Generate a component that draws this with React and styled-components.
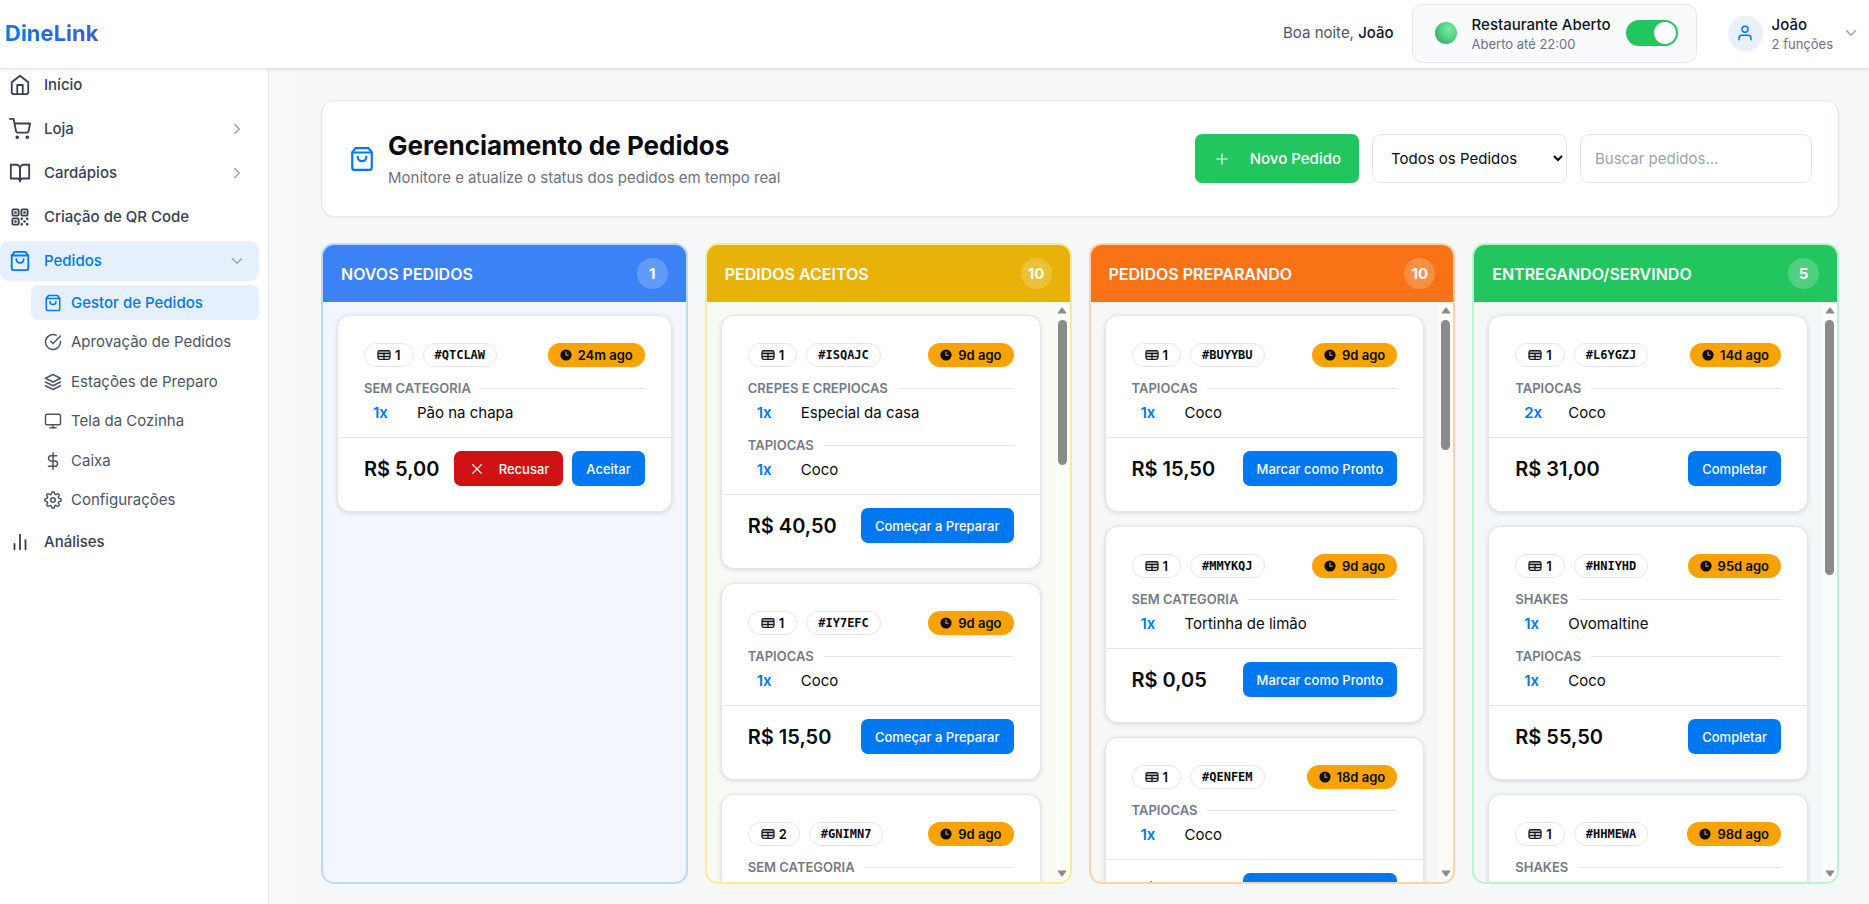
import React from "react";
import styled, { createGlobalStyle } from "styled-components";
import {
  FiBarChart2, FiBookOpen, FiCheckCircle, FiChevronDown, FiChevronRight, FiDollarSign, FiHome,
  FiLayers, FiMonitor, FiPlus, FiSettings, FiShoppingBag, FiShoppingCart, FiUser, FiX,
} from "react-icons/fi";
import { HiOutlineQrCode } from "react-icons/hi2";

const blue = "#0078f0";
const line = "#e3e6ea";

const GlobalStyle = createGlobalStyle`
  *, *::before, *::after { box-sizing: border-box; }
  body {
    margin: 0;
    font-family: Inter, "Liberation Sans", sans-serif;
    font-size: 15px;
    line-height: 20px;
    color: #080a12;
    background: #f6f8fa;
  }
  button, input, select { font: inherit; color: inherit; }
  h1, h2, p { margin: 0; }
  svg { flex: none; display: block; }
`;

const Page = styled.div`
  display: flex;
  flex-direction: column;
  height: 100vh;
  overflow: hidden;
`;

/* Top bar */
const TopBar = styled.header`
  position: relative;
  z-index: 2;
  flex: none;
  display: flex;
  align-items: center;
  height: 69px;
  padding: 0 9px 2px 5px;
  background: #fff;
  border-bottom: 1px solid #e5e9ec;
  box-shadow: 0 1px 3px rgba(15, 23, 42, 0.1);
`;

const Logo = styled.a`
  margin-right: auto;
  font-size: 22px;
  line-height: 28px;
  font-weight: 700;
  text-decoration: none;
  color: transparent;
  background: linear-gradient(90deg, #0b78e6, #3a5fd9);
  background-clip: text;
`;

const Greeting = styled.p`
  color: #4b5563;
  strong { font-weight: 500; color: #0f1420; }
`;

const StatusBox = styled.div`
  display: flex;
  align-items: center;
  height: 59px;
  margin: 0 31px 0 18px;
  padding: 0 18px 0 22px;
  gap: 15px;
  border: 1px solid ${line};
  border-radius: 11px;
  background: #f9fafc;
`;

const Orb = styled.span`
  width: 22px;
  height: 22px;
  border-radius: 50%;
  background: radial-gradient(circle at 65% 35%, #74ee9c 0%, #55cf85 45%, #2f9160 100%);
`;

const TwoLines = styled.div`
  display: flex;
  flex-direction: column;
  text-align: left;
  strong { font-weight: 500; line-height: 21px; color: #0f1420; }
  span { font-size: 13px; line-height: 18px; color: #6b7280; }
`;

const Toggle = styled.input`
  appearance: none;
  display: flex;
  justify-content: flex-end;
  width: 52px;
  height: 26px;
  margin: 0;
  padding: 2px;
  border-radius: 13px;
  background: #22c55e;
  &::before {
    content: "";
    width: 22px;
    height: 22px;
    border-radius: 50%;
    background: #fff;
  }
`;

const UserMenu = styled.button`
  display: flex;
  align-items: center;
  gap: 9px;
  padding: 0;
  border: 0;
  background: none;
  > svg { color: #9ca3af; }
`;

const Avatar = styled.span`
  display: grid;
  place-items: center;
  width: 35px;
  height: 35px;
  border-radius: 50%;
  color: ${blue};
  background: #e7f0fc;
`;

/* Sidebar */
const Body = styled.div`
  display: flex;
  flex: 1;
  min-height: 0;
`;

const Sidebar = styled.nav`
  flex: none;
  display: flex;
  flex-direction: column;
  gap: 4px;
  width: 269px;
  margin-top: -4px;
  padding-right: 9px;
  background: #fff;
  border-right: 1px solid ${line};
`;

const NavLink = styled.a`
  display: flex;
  align-items: center;
  gap: 13px;
  height: 40px;
  padding: 0 13px 0 9px;
  border-radius: 9px;
  font-weight: 500;
  text-decoration: none;
  color: ${(p) => (p.$active ? blue : "#374151")};
  background: ${(p) => (p.$active ? "#e5f0fc" : "none")};
  span { flex: 1; }
  span + svg { color: #9ca3af; }
`;

const SubNav = styled.div`
  display: grid;
  align-content: space-between;
  height: 233px;
  padding-left: 31px;
`;

const SubLink = styled.a`
  display: flex;
  align-items: center;
  gap: 9px;
  height: 35px;
  padding: 0 13px;
  border-radius: 7px;
  text-decoration: none;
  font-weight: ${(p) => (p.$active ? 500 : 400)};
  color: ${(p) => (p.$active ? blue : "#4b5563")};
  background: ${(p) => (p.$active ? "#e5f0fc" : "none")};
`;

/* Main area */
const Main = styled.main`
  flex: 1;
  min-width: 0;
  display: flex;
  flex-direction: column;
  gap: 26px;
  padding: 31px 30px 20px 52px;
  background: linear-gradient(90deg, #f9fafb 27px, #f5f7f9 27px);
`;

const PageHeader = styled.section`
  flex: none;
  display: flex;
  align-items: center;
  gap: 13px;
  height: 117px;
  padding: 0 26px 0 27px;
  border: 1px solid ${line};
  border-radius: 13px;
  background: #fff;
  box-shadow: 0 1px 2px rgba(15, 23, 42, 0.06);
  > svg { color: ${blue}; }
`;

const Heading = styled.div`
  margin-right: auto;
  h1 { font-size: 26px; line-height: 36px; font-weight: 700; }
  p { line-height: 24px; margin-top: 2px; color: #6b7280; }
`;

const NewOrder = styled.button`
  display: flex;
  align-items: center;
  gap: 19px;
  height: 49px;
  padding: 0 18px;
  border: 0;
  border-radius: 7px;
  font-weight: 500;
  color: #fff;
  background: #22c55e;
`;

const Filter = styled.select`
  width: 195px;
  height: 49px;
  padding: 0 0 0 14px;
  border: 1px solid ${line};
  border-radius: 9px;
  background: #fff;
`;

const Search = styled.input`
  width: 232px;
  height: 49px;
  padding: 0 14px;
  border: 1px solid ${line};
  border-radius: 9px;
  background: #fff;
  &::placeholder { color: #9ca3af; opacity: 1; }
`;

/* Board */
const Board = styled.div`
  flex: 1;
  min-height: 0;
  display: grid;
  grid-template-columns: repeat(4, minmax(0, 1fr));
  grid-template-rows: minmax(0, 1fr);
  gap: 17px;
`;

const Column = styled.section`
  display: flex;
  flex-direction: column;
  min-height: 0;
  overflow: hidden;
  border: 2px solid ${(p) => p.$tone.border};
  border-radius: 13px;
  background: ${(p) => p.$tone.body};
`;

const ColumnHead = styled.header`
  flex: none;
  display: flex;
  align-items: center;
  justify-content: space-between;
  height: 57px;
  padding: 0 18px;
  color: #fff;
  background: ${(p) => p.$tone.head};
  h2 { font-size: 16px; line-height: 22px; font-weight: 600; }
`;

const Count = styled.span`
  display: grid;
  place-items: center;
  width: 31px;
  height: 31px;
  border-radius: 50%;
  font-weight: 700;
  background: rgba(255, 255, 255, 0.2);
`;

const ColumnBody = styled.div`
  flex: 1;
  display: flex;
  min-height: 0;
`;

const Cards = styled.div`
  flex: 1;
  min-width: 0;
  display: flex;
  flex-direction: column;
  gap: 14px;
  padding: 13px 14px;
  overflow-y: auto;
  scrollbar-width: none;
`;

const ScrollTrack = styled.div`
  flex: none;
  display: flex;
  flex-direction: column;
  align-items: center;
  gap: 6px;
  width: 15px;
  padding: 5px 0;
  background: rgba(255, 255, 255, 0.6);
  color: #8b8b8b;
  svg:last-child { margin-top: auto; }
`;

const Thumb = styled.div`
  width: 9px;
  height: ${(p) => p.$size};
  border-radius: 5px;
  background: #8b8b8b;
`;

const Card = styled.article`
  flex: none;
  border: 1px solid ${line};
  border-radius: 13px;
  background: #fff;
  box-shadow: 0 1px 4px rgba(15, 23, 42, 0.14);
`;

const CardTop = styled.div`
  display: grid;
  gap: 12px;
  padding: 27px 26px 13px;
`;

const Tags = styled.div`
  display: flex;
  gap: 9px;
`;

const Pill = styled.span`
  display: flex;
  align-items: center;
  gap: 4px;
  height: 24px;
  padding: 0 12px;
  border: 1px solid ${line};
  border-radius: 12px;
  font-size: 13px;
  line-height: 18px;
  font-weight: 600;
`;

const CodePill = styled(Pill)`
  padding: 0 11px;
  font-family: "DejaVu Sans Mono", monospace;
  font-size: 12px;
  font-weight: 700;
`;

const AgePill = styled(Pill)`
  gap: 6px;
  margin-left: auto;
  border: 0;
  background: #faa200;
`;

const Category = styled.div`
  display: grid;
  gap: 4px;
`;

const CategoryName = styled.div`
  display: flex;
  align-items: center;
  gap: 10px;
  font-size: 13px;
  line-height: 18px;
  font-weight: 600;
  color: #747b86;
  &::after { content: ""; flex: 1; height: 1px; background: ${line}; }
`;

const Item = styled.div`
  display: grid;
  grid-template-columns: 44px 1fr;
  padding-left: 9px;
  line-height: 23px;
  b { font-weight: 600; color: ${blue}; }
`;

const CardFoot = styled.footer`
  display: flex;
  align-items: center;
  gap: 9px;
  padding: 13px 26px 25px;
  border-top: 1px solid ${line};
`;

const Price = styled.strong`
  margin-right: auto;
  font-size: 20px;
  line-height: 28px;
  font-weight: 600;
`;

const Action = styled.button`
  display: flex;
  align-items: center;
  gap: 13px;
  height: 35px;
  padding: 0 14px;
  border: 0;
  border-radius: 7px;
  font-size: 13px;
  font-weight: 500;
  white-space: nowrap;
  color: #fff;
  background: ${(p) => (p.$danger ? "#d01214" : blue)};
`;

const TableIcon = () => (
  <svg width="14" height="14" viewBox="0 0 14 14" fill="none" stroke="#15181f" strokeWidth="1.3">
    <rect x="1" y="3" width="12" height="3" fill="#9a9da3" stroke="none" />
    <rect x="1" y="2.6" width="12" height="8.8" rx="1.8" />
    <path d="M1 5.7h12M1 8.5h12M7 5.7v5.7" />
  </svg>
);

const ClockIcon = () => (
  <svg width="12" height="12" viewBox="0 0 12 12">
    <circle cx="6" cy="6" r="5.6" fill="#0b0c10" />
    <path d="M6 2.6V6.3h2.7" fill="none" stroke="#faa200" strokeWidth="1.1" />
  </svg>
);

const Arrow = ({ down }) => (
  <svg width="10" height="7" viewBox="0 0 10 7" fill="currentColor" stroke="currentColor" strokeLinejoin="round">
    <path d={down ? "M1 1h8L5 6.3z" : "M5 .7 9 6H1z"} />
  </svg>
);

const QrIcon = ({ size }) => <HiOutlineQrCode size={size} strokeWidth={2} />;

const nav = [
  { label: "Início", icon: FiHome },
  { label: "Loja", icon: FiShoppingCart, more: true },
  { label: "Cardápios", icon: FiBookOpen, more: true },
  { label: "Criação de QR Code", icon: QrIcon },
];

const subNav = [
  { label: "Gestor de Pedidos", icon: FiShoppingBag, active: true },
  { label: "Aprovação de Pedidos", icon: FiCheckCircle },
  { label: "Estações de Preparo", icon: FiLayers },
  { label: "Tela da Cozinha", icon: FiMonitor },
  { label: "Caixa", icon: FiDollarSign },
  { label: "Configurações", icon: FiSettings },
];

const order = (table, code, age, price, ...groups) => ({ table, code, age, price, groups });

const columns = [
  {
    title: "NOVOS PEDIDOS",
    count: 1,
    tone: { head: "#3b82f6", border: "#bcdaf8", body: "#f3f6fc" },
    orders: [order(1, "#QTCLAW", "24m ago", "R$ 5,00", ["SEM CATEGORIA", "1x", "Pão na chapa"])],
  },
  {
    title: "PEDIDOS ACEITOS",
    count: 10,
    action: "Começar a Preparar",
    thumb: "145px",
    tone: { head: "#e8b208", border: "#fbec94", body: "#f9f9f6" },
    orders: [
      order(1, "#ISQAJC", "9d ago", "R$ 40,50", ["CREPES E CREPIOCAS", "1x", "Especial da casa"], ["TAPIOCAS", "1x", "Coco"]),
      order(1, "#IY7EFC", "9d ago", "R$ 15,50", ["TAPIOCAS", "1x", "Coco"]),
      order(2, "#GNIMN7", "9d ago", "R$ 15,50", ["SEM CATEGORIA", "1x", "Coco"]),
    ],
  },
  {
    title: "PEDIDOS PREPARANDO",
    count: 10,
    action: "Marcar como Pronto",
    thumb: "130px",
    tone: { head: "#f97316", border: "#fcd3a8", body: "#f9f7f5" },
    orders: [
      order(1, "#BUYYBU", "9d ago", "R$ 15,50", ["TAPIOCAS", "1x", "Coco"]),
      order(1, "#MMYKQJ", "9d ago", "R$ 0,05", ["SEM CATEGORIA", "1x", "Tortinha de limão"]),
      order(1, "#QENFEM", "18d ago", "R$ 15,50", ["TAPIOCAS", "1x", "Coco"]),
    ],
  },
  {
    title: "ENTREGANDO/SERVINDO",
    count: 5,
    action: "Completar",
    thumb: "255px",
    tone: { head: "#22c55e", border: "#bbf3d0", body: "#f4f7f8" },
    orders: [
      order(1, "#L6YGZJ", "14d ago", "R$ 31,00", ["TAPIOCAS", "2x", "Coco"]),
      order(1, "#HNIYHD", "95d ago", "R$ 55,50", ["SHAKES", "1x", "Ovomaltine"], ["TAPIOCAS", "1x", "Coco"]),
      order(1, "#HHMEWA", "98d ago", "R$ 15,50", ["SHAKES", "1x", "Ovomaltine"]),
    ],
  },
];

function OrderCard({ data, action }) {
  return (
    <Card>
      <CardTop>
        <Tags>
          <Pill><TableIcon />{data.table}</Pill>
          <CodePill>{data.code}</CodePill>
          <AgePill><ClockIcon />{data.age}</AgePill>
        </Tags>
        {data.groups.map(([name, qty, item]) => (
          <Category key={name}>
            <CategoryName>{name}</CategoryName>
            <Item><b>{qty}</b><span>{item}</span></Item>
          </Category>
        ))}
      </CardTop>
      <CardFoot>
        <Price>{data.price}</Price>
        {action ? (
          <Action>{action}</Action>
        ) : (
          <>
            <Action $danger><FiX size={18} strokeWidth={1.5} />Recusar</Action>
            <Action>Aceitar</Action>
          </>
        )}
      </CardFoot>
    </Card>
  );
}

export default function App() {
  return (
    <Page>
      <GlobalStyle />
      <TopBar>
        <Logo href="#">DineLink</Logo>
        <Greeting>Boa noite, <strong>João</strong></Greeting>
        <StatusBox>
          <Orb />
          <TwoLines>
            <strong>Restaurante Aberto</strong>
            <span>Aberto até 22:00</span>
          </TwoLines>
          <Toggle type="checkbox" role="switch" aria-label="Restaurante Aberto" defaultChecked />
        </StatusBox>
        <UserMenu>
          <Avatar><FiUser size={18} /></Avatar>
          <TwoLines>
            <strong>João</strong>
            <span>2 funções</span>
          </TwoLines>
          <FiChevronDown size={18} />
        </UserMenu>
      </TopBar>
      <Body>
        <Sidebar>
          {nav.map(({ label, icon: Icon, more }) => (
            <NavLink key={label} href="#">
              <Icon size={22} />
              <span>{label}</span>
              {more && <FiChevronRight size={18} />}
            </NavLink>
          ))}
          <NavLink href="#" $active>
            <FiShoppingBag size={22} />
            <span>Pedidos</span>
            <FiChevronDown size={18} />
          </NavLink>
          <SubNav>
            {subNav.map(({ label, icon: Icon, active }) => (
              <SubLink key={label} href="#" $active={active}>
                <Icon size={18} />
                {label}
              </SubLink>
            ))}
          </SubNav>
          <NavLink href="#">
            <FiBarChart2 size={22} />
            <span>Análises</span>
          </NavLink>
        </Sidebar>
        <Main>
          <PageHeader>
            <FiShoppingBag size={26} />
            <Heading>
              <h1>Gerenciamento de Pedidos</h1>
              <p>Monitore e atualize o status dos pedidos em tempo real</p>
            </Heading>
            <NewOrder><FiPlus size={18} strokeWidth={1.5} />Novo Pedido</NewOrder>
            <Filter aria-label="Filtrar pedidos" defaultValue="all">
              <option value="all">Todos os Pedidos</option>
            </Filter>
            <Search type="text" aria-label="Buscar pedidos" placeholder="Buscar pedidos..." />
          </PageHeader>
          <Board>
            {columns.map((col) => (
              <Column key={col.title} $tone={col.tone}>
                <ColumnHead $tone={col.tone}>
                  <h2>{col.title}</h2>
                  <Count>{col.count}</Count>
                </ColumnHead>
                <ColumnBody>
                  <Cards>
                    {col.orders.map((o) => <OrderCard key={o.code} data={o} action={col.action} />)}
                  </Cards>
                  {col.thumb && (
                    <ScrollTrack aria-hidden="true">
                      <Arrow />
                      <Thumb $size={col.thumb} />
                      <Arrow down />
                    </ScrollTrack>
                  )}
                </ColumnBody>
              </Column>
            ))}
          </Board>
        </Main>
      </Body>
    </Page>
  );
}
